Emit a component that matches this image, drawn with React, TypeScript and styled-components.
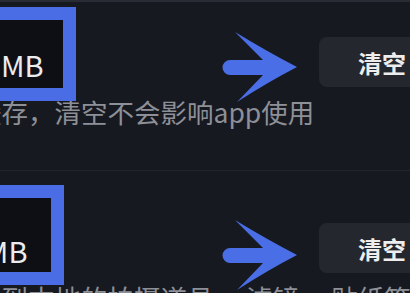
import React from "react";
import styled, { createGlobalStyle } from "styled-components";

const GlobalStyle = createGlobalStyle`
  html, body {
    margin: 0;
    padding: 0;
    background: #171921;
  }
  body {
    font-family: "Noto Sans CJK SC", "Noto Sans", sans-serif;
  }
`;

const Screen = styled.div`
  width: 410px;
  height: 293px;
  overflow: hidden;
  background: #171921;
  border-top: 2px solid #2a2c35;
  box-sizing: border-box;
`;

const List = styled.div`
  margin-left: -78px;
  margin-top: -17px;
  width: 523px;
`;

const Row = styled.div`
  position: relative;
  display: grid;
  grid-template-columns: minmax(0, 1fr) auto;
  align-items: start;
  padding: 52px 0 41px;
  border-bottom: 1px solid #23252d;
`;

const Info = styled.div`
  display: flex;
  flex-direction: column;
  gap: 13px;
  padding-top: 9px;
`;

const Size = styled.div`
  position: relative;
  z-index: 2;
  font-size: 29px;
  line-height: 36px;
  color: #ececef;
  white-space: nowrap;
`;

const Desc = styled.div`
  font-size: 26.5px;
  line-height: 34px;
  color: #8e9097;
  white-space: nowrap;
`;

const ClearButton = styled.button`
  width: 126px;
  height: 50px;
  border: none;
  border-radius: 8px;
  background: #25272f;
  color: #ededee;
  font-family: "Noto Sans CJK SC", sans-serif;
  font-size: 24px;
  font-weight: 700;
  padding: 0;
`;

const HighlightBox = styled.div<{ $top: number; $right: number; $height: number }>`
  position: absolute;
  z-index: 1;
  left: 20px;
  top: ${(p) => p.$top}px;
  width: ${(p) => p.$right - 20}px;
  height: ${(p) => p.$height}px;
  box-sizing: border-box;
  border: 13px solid #4a6de6;
  border-left-width: 0;
  background: #0e0f15;
`;

const ArrowMark = styled.svg<{ $top: number }>`
  position: absolute;
  z-index: 3;
  left: 300px;
  top: ${(p) => p.$top}px;
  width: 76px;
  height: 72px;
`;

const Arrow = ({ top }: { top: number }) => (
  <ArrowMark $top={top} viewBox="0 0 76 72">
    <path
      d="M8 29 L41 29 L13 1 Q46 21 75 36 Q46 51 15 71 L41 44 L8 44 A7.5 7.5 0 0 1 8 29 Z"
      fill="#4a6ee6"
    />
  </ArrowMark>
);

type Item = {
  size: string;
  desc: string;
  box: { top: number; right: number; height: number };
  arrowTop: number;
};

const items: Item[] = [
  {
    size: "123.4 MB",
    desc: "图片缓存，清空不会影响app使用",
    box: { top: 22, right: 154, height: 94 },
    arrowTop: 46,
  },
  {
    size: "45.6 MB",
    desc: "已下载到本地的拍摄道具， 滤镜， 贴纸等",
    box: { top: 14, right: 142, height: 100 },
    arrowTop: 48,
  },
];

export default function App() {
  return (
    <>
      <GlobalStyle />
      <Screen>
        <List>
          {items.map((it, i) => (
            <Row key={i}>
              <HighlightBox $top={it.box.top} $right={it.box.right} $height={it.box.height} />
              <Info>
                <Size>{it.size}</Size>
                <Desc>{it.desc}</Desc>
              </Info>
              <ClearButton>清空</ClearButton>
              <Arrow top={it.arrowTop} />
            </Row>
          ))}
        </List>
      </Screen>
    </>
  );
}
